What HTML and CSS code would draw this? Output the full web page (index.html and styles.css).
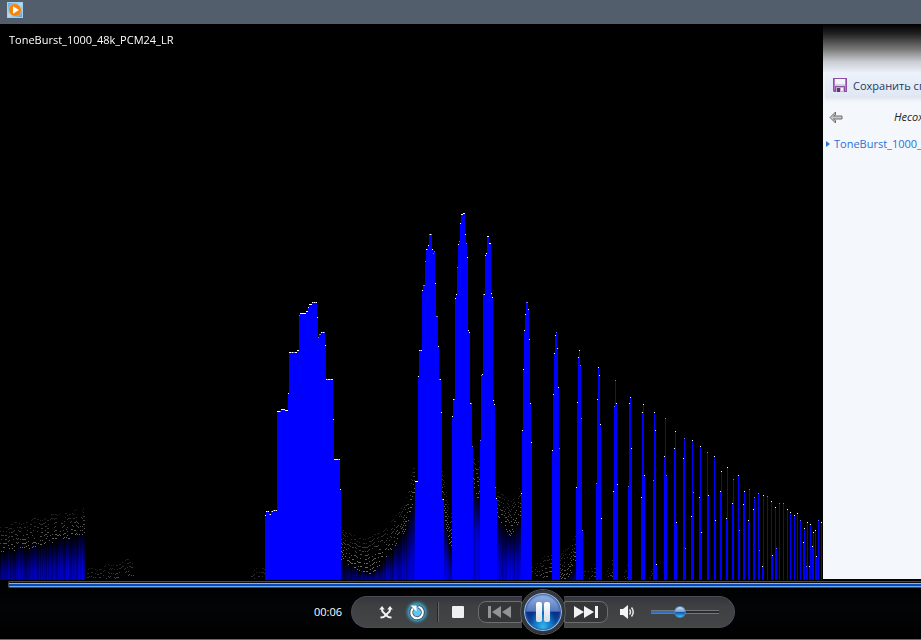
FILE: index.html
```html
<!DOCTYPE html>
<html lang="ru">

<head>
    <meta charset="UTF-8" />
    <title>ToneBurst_1000_48k_PCM24_LR</title>
    <meta name="viewport" content="width=device-width, initial-scale=1" />
    <link rel="stylesheet" href="styles.css">
</head>

<body>
    <div class="player">
        <header class="titlebar">
            <svg class="app-icon" width="16" height="16" viewBox="0 0 16 16">
                <defs>
                    <linearGradient id="appBg" x1="0" y1="0" x2="1" y2="1">
                        <stop offset="0" stop-color="#58a6d8" />
                        <stop offset=".5" stop-color="#b9def0" />
                        <stop offset="1" stop-color="#4f9fd2" />
                    </linearGradient>
                </defs>
                <rect x=".5" y=".5" width="15" height="15" fill="url(#appBg)" stroke="#9ed2ee" />
                <circle cx="8" cy="8" r="6" fill="#fb8308" />
                <path d="M6 4.3 12 8l-6 3.7z" fill="#fff" />
            </svg>
        </header>

        <main class="content">
            <section class="stage">
                <canvas id="spectrum" class="spectrum" width="823" height="556"></canvas>
                <h1 class="track-title">ToneBurst_1000_48k_PCM24_LR</h1>
            </section>

            <aside class="playlist">
                <div class="playlist-fade"></div>
                <button type="button" class="save-list">
                    <svg width="14" height="14" viewBox="0 0 14 14">
                        <path d="M0 0h14v14H1l-1-1z" fill="#8b50a6" />
                        <path d="M1 1h1v11H1zM12 1h1v12h-1z" fill="#b67bc7" />
                        <path d="M2 1h10v7H2z" fill="#f2f6fa" />
                        <path d="M2 6h10v2H2z" fill="#cfd6e0" />
                        <path d="M3 9h8v5H3z" fill="#c6aed0" />
                        <path d="M4 10h3v4H4z" fill="#583c68" />
                        <path d="M8 10h2v3H8z" fill="#f7effa" />
                    </svg>
                    <span>Сохранить список</span>
                </button>
                <div class="list-head">
                    <button type="button" class="back" aria-label="Назад">
                        <svg width="14" height="13" viewBox="0 0 14 13">
                            <path d="M1 6.5 6.5 1v3L4.500 5H13v3H4.500l2 1.500V12z" fill="#c7c7c7" stroke="#6e6e6e" />
                        </svg>
                    </button>
                    <span class="list-name">Несохраненный список</span>
                </div>
                <a class="list-item" href="#">ToneBurst_1000_48k_PCM24_LR</a>
            </aside>
        </main>

        <footer class="transport">
            <input class="seek" type="range" min="0" max="100" value="100" aria-label="Позиция">

            <div class="deck">
                <div class="side side-left">
                    <output class="time">00:06</output>
                    <div class="group group-left">
                        <button type="button" class="btn" aria-label="Случайный порядок">
                            <svg width="14" height="14" viewBox="0 0 14 14" fill="none" stroke="#f2f2f2" stroke-width="2">
                                <path d="M3 3v2q0 1.500 2 3l3 3q1 1.500 4.500 1.500" />
                                <path d="M11 3v2q0 1.500-2 3l-3 3Q5 12.500 1.500 12.500" />
                                <path d="M.2 4.500 3 1l2.800 3.500zM8.200 4.500 11 1l2.800 3.500z" fill="#f2f2f2" stroke="none" />
                            </svg>
                        </button>
                        <button type="button" class="btn repeat" aria-label="Повтор">
                            <svg width="16" height="16" viewBox="0 0 16 16" fill="none">
                                <circle cx="8" cy="8.500" r="5" fill="#5cc5f2" />
                                <path d="M9.500 2.800a5.800 5.800 0 1 1-5.600 1.600" stroke="#3a3f44" stroke-width="3.600" />
                                <path d="M9.500 2.800a5.800 5.800 0 1 1-5.600 1.600" stroke="#fff" stroke-width="2.200" />
                                <path d="M1.500 1.500h6v6z" fill="#fff" />
                            </svg>
                        </button>
                        <span class="divider"></span>
                        <button type="button" class="btn stop" aria-label="Стоп">
                            <svg width="12" height="12" viewBox="0 0 12 12">
                                <rect x="0" y="0" width="12" height="12" rx="1" fill="#f0f0f0" />
                            </svg>
                        </button>
                        <button type="button" class="skip prev" aria-label="Предыдущий" disabled>
                            <svg width="24" height="12" viewBox="0 0 24 12" fill="#929496">
                                <path d="M0 0h3v12H0zM13 0v12L4 6zM23 0v12l-9-6z" />
                            </svg>
                        </button>
                    </div>
                </div>

                <button type="button" class="pause" aria-label="Пауза">
                    <svg width="14" height="20" viewBox="0 0 14 20">
                        <defs>
                            <linearGradient id="bars" x1="0" y1="0" x2="0" y2="1">
                                <stop offset="0" stop-color="#fff" />
                                <stop offset="1" stop-color="#d3dbe1" />
                            </linearGradient>
                        </defs>
                        <rect x="0" y="0" width="6" height="20" rx="2" fill="url(#bars)" />
                        <rect x="8" y="0" width="6" height="20" rx="2" fill="url(#bars)" />
                    </svg>
                </button>

                <div class="side side-right">
                    <div class="group group-right">
                        <button type="button" class="skip next" aria-label="Следующий">
                            <svg width="24" height="12" viewBox="0 0 24 12" fill="#f2f2f2">
                                <path d="M0 0v12l10-6zM10 0v12l10-6zM21 0h3v12h-3z" />
                            </svg>
                        </button>
                        <button type="button" class="btn mute" aria-label="Звук">
                            <svg width="15" height="14" viewBox="0 0 15 14">
                                <path d="M0 4h3l5-4v14L3 10H0z" fill="#f5f5f5" />
                                <path d="M9.500 4.500q2 2.500 0 5M11.500 2.500q3.500 4.500 0 9" fill="none" stroke="#e6e6e6" stroke-width="1.500" />
                            </svg>
                        </button>
                        <input class="volume" type="range" min="0" max="100" value="41" aria-label="Громкость">
                    </div>
                </div>
            </div>
        </footer>
    </div>

    <script src="spectrum.js"></script>
</body>

</html>
```

FILE: styles.css
```css
* {
    box-sizing: border-box;
    font-family: "Open Sans", "Noto Sans", sans-serif;
}

body {
    margin: 0;
    background: #000;
}

button {
    display: flex;
    align-items: center;
    justify-content: center;
    margin: 0;
    padding: 0;
    border: none;
    background: none;
    cursor: pointer;
}

.player {
    display: flex;
    flex-direction: column;
    height: 100vh;
    border-bottom: 1px solid #646c75;
}

.titlebar {
    flex: none;
    height: 24px;
    padding: 2px 7px;
    background: #525e6c;
}

.app-icon {
    display: block;
}

.content {
    flex: 1;
    min-height: 0;
    display: grid;
    grid-template-columns: minmax(0, 1fr) 98px;
}

/* Visualisation */

.stage {
    position: relative;
    min-height: 0;
    background: #000;
}

.spectrum {
    display: block;
    width: 100%;
    height: 100%;
    image-rendering: pixelated;
}

.track-title {
    position: absolute;
    top: 8px;
    left: 9px;
    margin: 0;
    color: #fff;
    font-size: 11px;
    line-height: 16px;
    font-weight: 400;
}

/* Playlist */

.playlist {
    margin-bottom: 1px;
    background: #f4f7fc;
    font-size: 11px;
    line-height: 16px;
    white-space: nowrap;
    overflow: hidden;
}

.playlist-fade {
    height: 48px;
    background: linear-gradient(#000 0%, #202020 20%, #777 52%, #c8cbd0 78%, #e9eef7 100%);
}

.save-list {
    justify-content: flex-start;
    gap: 6px;
    width: 100%;
    height: 26px;
    margin-left: 2px;
    padding: 0 8px;
    background: linear-gradient(#edf2fb, #dfe7f4);
    box-shadow: 0 2px 3px #e6e9ee;
    color: #1e395b;
    font-size: 11px;
}

.save-list svg {
    flex: none;
}

.list-head {
    display: flex;
    align-items: center;
    gap: 51px;
    height: 38px;
    padding-left: 6px;
}

.list-name {
    color: #222;
    font-style: italic;
}

.list-item {
    display: flex;
    align-items: center;
    gap: 4px;
    padding: 0 3px;
    color: #2a72d8;
    text-decoration: none;
}

.list-item::before {
    content: "";
    border: solid transparent;
    border-width: 3px 0 3px 4px;
    border-left-color: #2a72d8;
}

/* Transport */

.transport {
    flex: none;
    height: 59px;
    background: linear-gradient(#000, #030406 50%, #000);
}

.seek {
    display: block;
    appearance: none;
    width: calc(100% - 8px);
    height: 7px;
    margin: 1px 0 2px 8px;
    border: 1px solid #484848;
    border-right: none;
    border-radius: 2px 0 0 2px;
    background: linear-gradient(#111 1px, #6fbcf8 1px 2px, #0b49b8 2px 4px, #6aaaf2 4px);
}

.seek::-webkit-slider-thumb {
    appearance: none;
    width: 1px;
    height: 1px;
}

.deck {
    display: grid;
    grid-template-columns: 1fr 44px 1fr;
    align-items: center;
    padding-left: 165px;
}

.side {
    display: flex;
    align-items: center;
}

.side-left {
    justify-content: flex-end;
    gap: 9px;
}

.time {
    color: #fff;
    font-size: 11px;
    line-height: 16px;
}

.group {
    display: flex;
    align-items: center;
    height: 32px;
    border: 1px solid #4c4b58;
    background: linear-gradient(#35363b, #3e4042 30%, #434547);
}

.group-left {
    width: 171px;
    margin-right: -1px;
    padding-left: 24px;
    border-right: none;
    border-radius: 16px 0 0 16px;
}

.group-right {
    width: 171px;
    margin-left: -1px;
    border-left: none;
    border-radius: 0 16px 16px 0;
}

.btn {
    flex: none;
    width: 20px;
    height: 20px;
}

.repeat {
    width: 18px;
    height: 18px;
    margin-left: 12px;
    border-radius: 50%;
    background: #3b8fb2;
    box-shadow: 0 0 3px 1px #3b9cc0;
}

.divider {
    width: 2px;
    height: 20px;
    margin-left: 11px;
    border-left: 1px solid #242527;
    border-right: 1px solid #626568;
}

.stop {
    margin-left: 9px;
}

.skip {
    flex: none;
    width: 44px;
    height: 22px;
    border: 1px solid #6c6e70;
    background: #343638;
}

.prev {
    margin-left: 10px;
    border-radius: 8px 2px 2px 8px;
}

.next {
    border-radius: 2px 8px 8px 2px;
}

.mute {
    margin-left: 9px;
}

.pause {
    position: relative;
    z-index: 1;
    width: 44px;
    height: 44px;
    border: 3px solid #34363a;
    border-radius: 50%;
    background:
        radial-gradient(ellipse at 50% 100%, #43c7f5 0, #1589d4 24%, transparent 50%),
        linear-gradient(#9eb9e4, #5478bc 48%, #082d87 50%, #074f9f 80%, #35b7ed);
    box-shadow: inset 0 0 0 1px #a4c2e7, inset 0 0 2px 2px #315ba6, 0 0 0 1px #55575b;
}

.volume {
    appearance: none;
    width: 68px;
    height: 12px;
    margin: 0 0 0 14px;
    background: linear-gradient(90deg, #286fc5 41%, #292b2e 41%) center / 100% 2px no-repeat,
        linear-gradient(#74777a, #74777a) center / 100% 4px no-repeat;
}

.volume::-webkit-slider-thumb {
    appearance: none;
    width: 12px;
    height: 12px;
    border: 1px solid #4b7eb8;
    border-radius: 50%;
    background: linear-gradient(#cfe0f1, #759bc9 48%, #0b4ca5 50%, #37c6ff);
}
```

FILE: spectrum.js
```js
const canvas = document.getElementById('spectrum');
const ctx = canvas.getContext('2d');
const base = canvas.height;
const top0 = 24; // levels below are window rows, the title bar takes the first 24

// each peak: x of a step, level of a step, ..., x where the peak ends
const peaks = [
    [265, 515, 266, 511, 269, 514, 271, 511, 273, 510, 277, 411, 281, 409, 285, 410, 288, 393, 289, 352, 297, 350, 299, 315, 300, 313, 306, 311, 308, 307, 309, 304, 312, 302, 317, 317, 318, 337, 319, 334, 321, 332, 325, 345, 326, 379, 333, 419, 334, 459, 340, 489, 341],
    [415, 481, 418, 376, 419, 350, 422, 290, 423, 285, 425, 261, 426, 249, 428, 245, 429, 234, 432, 249, 433, 253, 434, 251, 435, 283, 436, 316, 438, 346, 439, 379, 441, 412, 442, 499, 444],
    [452, 416, 453, 399, 455, 298, 456, 294, 457, 267, 458, 244, 459, 241, 460, 223, 461, 214, 463, 213, 465, 234, 466, 243, 467, 257, 468, 330, 469, 332, 470, 403, 472, 446, 473],
    [480, 440, 481, 375, 482, 374, 483, 294, 485, 255, 486, 253, 487, 236, 489, 243, 491, 293, 492, 297, 493, 400, 494, 404, 495, 487, 496, 498, 497],
    [521, 493, 522, 430, 523, 369, 524, 330, 525, 314, 526, 302, 528, 309, 529, 339, 530, 403, 531, 442, 532],
    [552, 450, 553, 394, 554, 353, 555, 335, 556, 332, 557, 348, 558, 387, 559, 448, 560],
    [576, 487, 577, 402, 578, 357, 579, 350, 580, 365, 581, 418, 582, 530, 583],
    [596, 483, 597, 399, 598, 367, 599, 375, 600, 424, 601, 518, 602],
    [613, 491, 614, 406, 615, 380, 616, 403, 617, 484, 618],
    [628, 486, 629, 403, 630, 397, 631, 448, 632],
    [641, 497, 642, 412, 643, 404, 644, 475, 645],
    [653, 480, 654, 412, 655, 430, 656, 564, 657],
    [664, 456, 665, 418, 666, 475, 667],
    [674, 448, 675, 431, 676, 522, 677],
    [683, 458, 684, 438, 685, 548, 686],
    [691, 516, 692, 440, 693, 492, 694],
    [699, 497, 700, 446, 701, 532, 702],
    [707, 452, 708, 495, 709],
    [714, 456, 715, 520, 716],
    [720, 491, 721, 471, 722],
    [726, 518, 727, 467, 728],
    [732, 503, 733, 479, 734],
    [738, 475, 739, 530, 740],
    [743, 504, 744, 491, 745],
    [748, 520, 749, 489, 750],
    [753, 509, 754, 497, 755],
    [758, 493, 759, 550, 760],
    [762, 566, 763, 495, 764],
    [767, 496, 768],
    [771, 501, 772, 555, 773],
    [775, 507, 776, 548, 777],
    [779, 503, 780], [783, 503, 784], [787, 509, 788], [790, 512, 791],
    [794, 515, 795], [797, 513, 798], [800, 520, 801],
    [803, 542, 804, 528, 805],
    [806, 566, 807, 522, 808],
    [809, 566, 810, 524, 811],
    [812, 546, 813, 532, 814],
    [815, 530, 816, 556, 817],
    [818, 520, 819], [821, 522, 822]
];

// noise floor: points are [x, top of the dots, top of the blue], solid is the final opacity
const floors = [
    { points: [[0, 526, 548], [40, 518, 540], [85, 507, 528]], solid: [0.7, 1] },
    { points: [[86, 570, 580], [110, 565, 580], [134, 558, 580]] },
    { points: [[250, 570, 580], [265, 568, 580]] },
    { points: [[341, 526, 554], [352, 536, 564], [370, 538, 570], [390, 524, 548], [405, 500, 525], [415, 460, 490]], solid: [0.4, 1] },
    { points: [[442, 470, 500], [448, 505, 535], [452, 515, 545]], solid: [1, 1] },
    { points: [[473, 456, 482], [480, 462, 498]], solid: [1, 1], full: 545 },
    { points: [[497, 490, 510], [510, 502, 530], [521, 485, 515]], solid: [1, 1] },
    { points: [[532, 565, 580], [552, 552, 580]] },
    { points: [[560, 556, 580], [570, 544, 570], [576, 530, 560]], solid: [0.1, 0.5] },
    { points: [[583, 572, 580], [596, 563, 580]] },
    { points: [[606, 572, 580], [613, 552, 580]] },
    { points: [[624, 570, 580], [628, 560, 580]] },
    { points: [[649, 576, 580], [653, 566, 580]] }
];

let seed = 7;

function rand() {
    seed = (seed * 16807) % 2147483647;
    return seed / 2147483647;
}

function dot(x, y, alpha) {
    ctx.fillStyle = 'rgba(255, 255, 245, ' + alpha + ')';
    ctx.fillRect(x, y - top0, 1, 1);
}

function drawFloor(floor) {
    const pts = floor.points;
    const from = pts[0][0];
    const to = pts[pts.length - 1][0];

    for (let x = from; x < to; x++) {
        let i = 0;
        while (x >= pts[i + 1][0]) i++;
        const t = (x - pts[i][0]) / (pts[i + 1][0] - pts[i][0]);
        const dots = pts[i][1] + (pts[i + 1][1] - pts[i][1]) * t;
        const blue = pts[i][2] + (pts[i + 1][2] - pts[i][2]) * t;
        const streak = rand();

        if (floor.solid) {
            const k = (x - from) / (to - from);
            const alpha = (floor.solid[0] + (floor.solid[1] - floor.solid[0]) * k) * (0.6 + streak * 0.4);
            const start = Math.round(blue - top0 + (1 - streak) * 8);
            const fade = ctx.createLinearGradient(0, start, 0, floor.full ? floor.full - top0 : base);
            fade.addColorStop(0, 'rgba(0, 0, 255, 0)');
            fade.addColorStop(0.7, 'rgba(0, 0, 255, ' + alpha * 0.85 + ')');
            fade.addColorStop(1, 'rgba(0, 0, 255, ' + alpha + ')');
            ctx.fillStyle = fade;
            ctx.fillRect(x, start, 1, base - start);
        }

        // dots fall in broken rows, brighter towards the blue
        const end = Math.min(blue + 6, 579);
        const wave = Math.round(Math.sin(x / 3) * 1.5 + rand());
        for (let y = Math.round(dots) + wave; y < end; y += 4) {
            if (rand() < 0.5) {
                dot(x, y, 0.12 + 0.3 * Math.min(1, Math.max(0, y - dots) / 26));
            }
        }
    }
}

function drawPeak(steps) {
    for (let i = 0; i + 2 < steps.length; i += 2) {
        const x = steps[i];
        const y = steps[i + 1];
        const end = steps[i + 2];
        ctx.fillStyle = '#0000ff';
        ctx.fillRect(x, y - top0, end - x, base - y + top0);
        for (let c = x; c < end; c++) {
            dot(c, y, rand() < 0.7 ? 1 : 0.45);
        }
    }
}

ctx.fillStyle = '#000';
ctx.fillRect(0, 0, canvas.width, canvas.height);
floors.forEach(drawFloor);
peaks.forEach(drawPeak);
```
